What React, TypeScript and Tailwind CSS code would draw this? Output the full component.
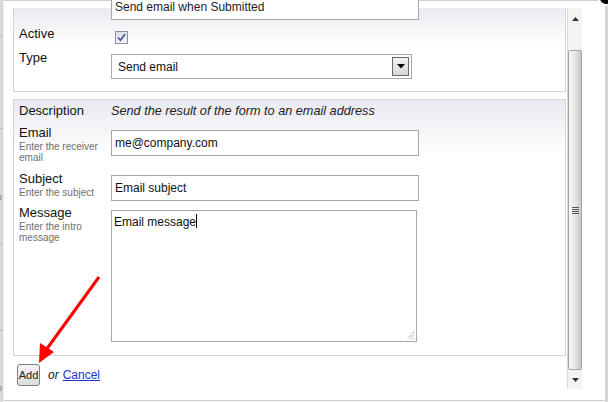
import React from "react";

const F = { fontFamily: '"Liberation Sans", Arial, sans-serif' };

function Label({ title, sub }: { title: string; sub?: string[] }) {
  return (
    <div className="w-[92px] shrink-0">
      <div className="text-[13px] leading-[16px] text-[#111]">{title}</div>
      {sub && (
        <div className="text-[10px] leading-[11px] text-[#6f6f6f]">
          {sub.map((s) => (
            <div key={s}>{s}</div>
          ))}
        </div>
      )}
    </div>
  );
}

function Box({ w, h, text, mt }: { w: string; h: string; text: string; mt: string }) {
  return (
    <div className={`${w} ${h} ${mt} border border-[#a7a7a7] bg-white px-[3px] text-[12px] text-[#111]`}>
      <div className="leading-[24px]">{text}</div>
    </div>
  );
}

export default function App() {
  return (
    <div className="w-[608px] h-[402px] flex bg-white overflow-hidden relative" style={F}>
      {/* background page strip on left */}
      <div className="w-[4px] shrink-0 bg-[#d9d9d9] flex flex-col border-r border-[#ececec] text-[9px] leading-[10px] text-[#777] overflow-hidden">
        <div className="h-[36px]" />
        <div className="h-px bg-[#b9b9b9]" />
        <div className="h-[91px]" />
        <div className="h-px bg-[#b9b9b9]" />
        <div className="h-[63px]" />
        <div className="h-[10px] -ml-[3px]">o</div>
        <div className="h-[41px]" />
        <div className="h-px bg-[#b9b9b9]" />
        <div className="h-[86px]" />
        <div className="h-px bg-[#b9b9b9]" />
        <div className="h-[52px]" />
        <div className="h-[10px] -ml-[3px]">o</div>
      </div>

      {/* dialog */}
      <div className="flex-1 flex flex-col border-t border-[#d0d0d0]">
        {/* overflowing top input */}
        <div className="h-[7px] pl-[107px]">
          <div className="relative z-10 -mt-[7px] w-[308px] h-[26px] border border-[#a7a7a7] bg-white px-[3px] text-[12px] text-[#222] leading-[24px] overflow-hidden">
            Send email when Submitted
          </div>
        </div>

        <div className="flex h-[381px]">
          {/* content */}
          <div className="w-[563px] pl-[9px] flex flex-col">
            {/* panel 1 */}
            <div className="w-[553px] h-[84px] border-x border-b border-[#d4d4d4] bg-[linear-gradient(#eaeaf2_0px,#ffffff_36px)] pl-[5px] pt-[18px]">
              <div className="flex h-[24px]">
                <Label title="Active" />
                <div className="mt-[5px] ml-[4px] w-[13px] h-[13px] border border-[#8e8f9f] bg-[linear-gradient(#dcdde6,#f3f3f6)] flex items-center justify-center">
                  <svg width="9" height="9" viewBox="0 0 9 9">
                    <path d="M1 4.5 L3.4 7.2 L8 1.2" fill="none" stroke="#3d4f8c" strokeWidth="1.6" />
                  </svg>
                </div>
              </div>
              <div className="flex">
                <Label title="Type" />
                <div className="mt-[4px] w-[301px] h-[25px] border border-[#a7a7a7] bg-white flex items-center justify-between pl-[6px] pr-[2px]">
                  <span className="text-[12px] text-[#111]">Send email</span>
                  <div className="w-[17px] h-[19px] border border-[#6a6a6a] bg-[linear-gradient(#f4f4f4,#d6d6d6)] flex items-center justify-center">
                    <svg width="8" height="5" viewBox="0 0 8 5">
                      <path d="M0 0 H8 L4 4.5 Z" fill="#000" />
                    </svg>
                  </div>
                </div>
              </div>
            </div>

            {/* panel 2 */}
            <div className="mt-[7px] w-[553px] h-[257px] border border-[#d4d4d4] bg-[linear-gradient(#e9e9f1_0px,#ffffff_55px)] pl-[5px] pt-[3px]">
              <div className="flex h-[22px]">
                <Label title="Description" />
                <div className="text-[12.7px] leading-[16px] italic text-[#222]">
                  Send the result of the form to an email address
                </div>
              </div>
              <div className="flex h-[46px]">
                <Label title="Email" sub={["Enter the receiver", "email"]} />
                <Box w="w-[308px]" h="h-[26px]" mt="mt-[5px]" text="me@company.com" />
              </div>
              <div className="flex h-[34px]">
                <Label title="Subject" sub={["Enter the subject"]} />
                <Box w="w-[308px]" h="h-[26px]" mt="mt-[4px]" text="Email subject" />
              </div>
              <div className="flex">
                <Label title="Message" sub={["Enter the intro", "message"]} />
                <div className="relative mt-[5px] w-[306px] h-[132px] border border-[#a7a7a7] bg-white px-[2px] text-[12px] text-[#111]">
                  <div className="leading-[22px]">
                    Email message
                    <span className="inline-block w-px h-[14px] bg-black align-[-2px]" />
                  </div>
                  <svg className="absolute right-[1px] bottom-[1px]" width="10" height="10" viewBox="0 0 10 10">
                    <path d="M9 2 L2 9 M9 5 L5 9 M9 8 L8 9" stroke="#8a8a8a" strokeWidth="1" strokeDasharray="1 1" />
                  </svg>
                </div>
              </div>
            </div>

            {/* actions */}
            <div className="mt-[8px] ml-[4px] flex items-center h-[22px]">
              <button className="w-[23px] h-[22px] rounded-[3px] border border-[#7f7f7f] bg-[linear-gradient(#f6f6f6,#dcdcdc)] text-[11px] text-[#222] leading-none p-0">
                Add
              </button>
              <span className="ml-[8px] text-[12px] italic text-[#111]">or</span>
              <a className="ml-[4px] text-[12px] text-[#2233cc] underline">Cancel</a>
            </div>
          </div>

          {/* scrollbar */}
          <div className="w-[15px] flex flex-col bg-[#f3f3f3] border-l border-[#dadada]">
            <div className="h-[18px] flex items-center justify-center pt-[3px]">
              <svg width="7" height="4" viewBox="0 0 7 4">
                <path d="M0 4 H7 L3.5 0 Z" fill="#333" />
              </svg>
            </div>
            <div className="h-[24px]" />
            <div className="h-[320px] rounded-[2px] border border-[#a3a3a3] bg-[linear-gradient(90deg,#f9f9f9,#e6e6e6_50%,#c9c9c9)] flex items-center justify-center">
              <div className="flex flex-col gap-[1px]">
                <div className="w-[7px] h-px bg-[#555]" />
                <div className="w-[7px] h-px bg-[#555]" />
                <div className="w-[7px] h-px bg-[#555]" />
                <div className="w-[7px] h-px bg-[#555]" />
              </div>
            </div>
            <div className="flex-1 flex items-center justify-center">
              <svg width="7" height="4" viewBox="0 0 7 4">
                <path d="M0 0 H7 L3.5 4 Z" fill="#333" />
              </svg>
            </div>
          </div>
          <div className="flex-1" />
        </div>

        <div className="h-[11px]" />
        <div className="h-px bg-[#cdcdcd]" />
      </div>

      {/* right strip */}
      <div className="w-[3px] shrink-0 bg-[#d3d3d3]" />

      {/* close button fragment */}
      <div className="absolute right-[-6px] top-[-10px] w-[16px] h-[16px] rounded-full bg-black border-2 border-white" />

      {/* red annotation arrow */}
      <svg className="absolute left-0 top-0 pointer-events-none" width="608" height="402">
        <line x1="99" y1="277" x2="46" y2="350" stroke="#ff0000" strokeWidth="3" />
        <polygon points="39,363 40,343 54,352" fill="#ff0000" />
      </svg>
    </div>
  );
}
